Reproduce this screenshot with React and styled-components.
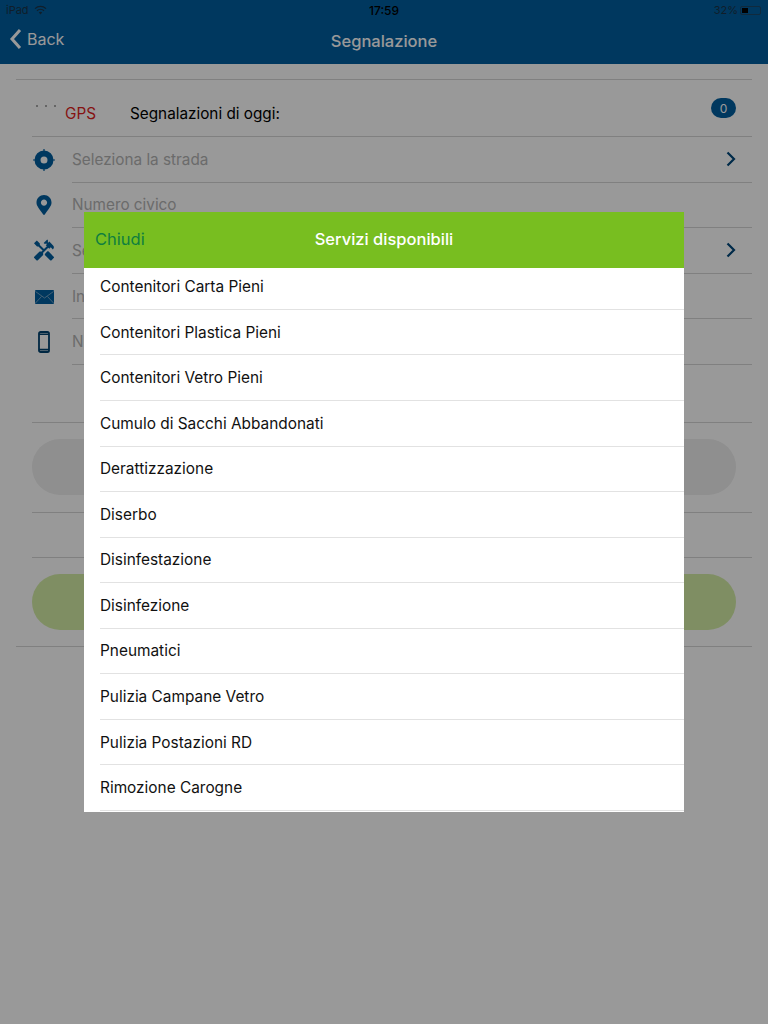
import React from "react";
import styled, { createGlobalStyle } from "styled-components";
import { FaMapMarkerAlt } from "react-icons/fa";
import { MdHandyman } from "react-icons/md";

const GlobalStyle = createGlobalStyle`
html, body {
    margin: 0;
    height: 100%;
    background: #fff;
    font-family: "Inter", "Liberation Sans", sans-serif;
}
* { box-sizing: border-box; }
`

const Page = styled.div`
width: 768px;
height: 1024px;
position: relative;
overflow: hidden;
background: #fff;
`
const Header = styled.header`
height: 64px;
background: #005e9f;
display: flex;
flex-direction: column;
`
const StatusBar = styled.div`
height: 20px;
padding: 0 6px;
display: grid;
grid-template-columns: 1fr auto 1fr;
align-items: center;
font-size: 11px;
color: #1b3347;
`
const StatusLeft = styled.div`
display: flex;
align-items: center;
gap: 5px;
`
const StatusRight = styled.div`
display: flex;
align-items: center;
justify-content: flex-end;
gap: 2px;
padding-right: 1px;
`
const Clock = styled.div`
font-weight: 500;
font-size: 12px;
color: #000;
`
const Battery = styled.div`
width: 21px;
height: 9px;
border: 1px solid #1b4666;
border-radius: 2px;
padding: 1px;
& > div { width: 6px; height: 100%; background: #000; }
`
const NavBar = styled.div`
flex: 1;
position: relative;
display: flex;
align-items: center;
justify-content: center;
padding-bottom: 2px;
color: #fff;
`
const NavTitle = styled.div`
font-size: 16.5px;
font-weight: 500;
`
const BackLink = styled.div`
position: absolute;
left: 9px;
top: 8px;
display: flex;
align-items: center;
gap: 5px;
font-size: 16px;
`
const Form = styled.main`
padding: 15px 16px 0;
`
const Divider = styled.div`
height: 1px;
background: #d6d6d6;
margin: ${props => props.$before || 0}px 0 ${props => props.$after || 0}px ${props => props.$inset || 0}px;
`
const GpsRow = styled.div`
height: 57px;
margin-left: 16px;
padding-right: 16px;
border-bottom: 1px solid #d6d6d6;
display: flex;
align-items: center;
font-size: 15.3px;
color: #000;
`
const Dots = styled.div`
width: 33px;
align-self: flex-start;
margin-top: 25px;
padding-left: 4px;
display: flex;
gap: 7px;
& > span { width: 2px; height: 2px; border-radius: 50%; background: #8b8b8b; }
`
const GpsLabel = styled.span`
color: #e01f1f;
width: 65px;
padding-top: 11px;
`
const TodayLabel = styled.span`
padding-top: 11px;
flex: 1;
`
const Badge = styled.span`
width: 25px;
height: 20px;
border-radius: 10px;
background: #005e9f;
color: #fff;
font-size: 12px;
display: flex;
align-items: center;
justify-content: center;
`
const FieldRow = styled.div`
height: 45.6px;
margin-left: 16px;
display: flex;
`
const IconSlot = styled.div`
width: 24px;
margin-right: 16px;
display: flex;
align-items: center;
justify-content: center;
color: #005e9f;
font-size: ${props => props.$size || 20}px;
`
const FieldBody = styled.div`
flex: 1;
border-bottom: 1px solid #d6d6d6;
display: flex;
align-items: center;
justify-content: space-between;
padding-right: 16px;
font-size: 15.3px;
color: #b3b3b3;
`
const ActionButton = styled.div`
height: 56px;
margin: 0 16px;
border-radius: 28px;
background: ${props => props.$bg};
`
const Backdrop = styled.div`
position: absolute;
inset: 0;
background: rgba(0, 0, 0, 0.4);
`
const Modal = styled.section`
position: absolute;
left: 84px;
top: 212px;
width: 600px;
height: 600px;
background: #fff;
overflow: hidden;
display: flex;
flex-direction: column;
`
const ModalHeader = styled.div`
height: 56px;
flex: none;
position: relative;
z-index: 1;
padding-bottom: 2px;
background: #78be20;
display: flex;
align-items: center;
justify-content: center;
color: #fff;
font-size: 16.5px;
font-weight: 500;
`
const CloseLink = styled.span`
position: absolute;
left: 11px;
color: #0f7f3f;
font-weight: 400;
`
const ServiceList = styled.ul`
list-style: none;
margin: -3.7px 0 0 16px;
padding: 0;
`
const ServiceItem = styled.li`
height: 45.55px;
border-bottom: 1px solid #e2e2e2;
display: flex;
align-items: center;
font-size: 15.4px;
color: #111;
`

const Chevron = () => (
    <svg width="10" height="16" viewBox="0 0 10 16" fill="none" stroke="#00477a" strokeWidth="2.2">
        <path d="M1.500 1.500L8 8l-6.500 6.500" />
    </svg>
)

const BackChevron = () => (
    <svg width="13" height="22" viewBox="0 0 13 22" fill="none" stroke="#fff" strokeWidth="3">
        <path d="M11 2L3 11l8 9" />
    </svg>
)

const WifiIcon = () => (
    <svg width="13" height="10" viewBox="0 0 13 10" fill="none" stroke="#1b3347" strokeWidth="1.300">
        <path d="M1 3.600a8 8 0 0 1 11 0M3 5.800a5 5 0 0 1 7 0" />
        <path d="M6.500 9.500L4.800 7.600a2.500 2.500 0 0 1 3.400 0z" fill="#1b3347" stroke="none" />
    </svg>
)

const TargetIcon = () => (
    <svg width="24" height="24" viewBox="0 0 24 24">
        <path d="M12 1v3M12 20v3M1 12h3M20 12h3" stroke="#005e9f" strokeWidth="1.200" />
        <path fillRule="evenodd" fill="#005e9f" d="M12 2.500a9.500 9.500 0 1 1 0 19a9.500 9.500 0 1 1 0-19zM12 8.500a3.500 3.500 0 1 0 0 7a3.500 3.500 0 1 0 0-7z" />
    </svg>
)

const MailIcon = () => (
    <svg width="19" height="14" viewBox="0 0 19 14">
        <rect width="19" height="14" rx="1" fill="#005e9f" />
        <path d="M0.500 1.500L9.500 8l9-6.500M0.500 13l6-6.500M18.500 13l-6-6.500" fill="none" stroke="#7fa9c6" strokeWidth="0.900" />
    </svg>
)

const PhoneIcon = () => (
    <svg width="12" height="22" viewBox="0 0 12 22" fill="none" stroke="#00426f">
        <rect x="1" y="1" width="10" height="20" rx="1.600" strokeWidth="1.800" />
        <path d="M1 3.200h10M1 18.600h10" strokeWidth="1.600" />
    </svg>
)

const services = [
    "Contenitori Carta Pieni",
    "Contenitori Plastica Pieni",
    "Contenitori Vetro Pieni",
    "Cumulo di Sacchi Abbandonati",
    "Derattizzazione",
    "Diserbo",
    "Disinfestazione",
    "Disinfezione",
    "Pneumatici",
    "Pulizia Campane Vetro",
    "Pulizia Postazioni RD",
    "Rimozione Carogne",
]

const App = () => {
    return (
        <Page>
            <GlobalStyle />
            <Header>
                <StatusBar>
                    <StatusLeft>iPad <WifiIcon /></StatusLeft>
                    <Clock>17:59</Clock>
                    <StatusRight>32% <Battery><div /></Battery></StatusRight>
                </StatusBar>
                <NavBar>
                    <BackLink><BackChevron /> Back</BackLink>
                    <NavTitle>Segnalazione</NavTitle>
                </NavBar>
            </Header>
            <Form>
                <Divider />
                <GpsRow>
                    <Dots><span /><span /><span /></Dots>
                    <GpsLabel>GPS</GpsLabel>
                    <TodayLabel>Segnalazioni di oggi:</TodayLabel>
                    <Badge>0</Badge>
                </GpsRow>
                <FieldRow>
                    <IconSlot><TargetIcon /></IconSlot>
                    <FieldBody>Seleziona la strada <Chevron /></FieldBody>
                </FieldRow>
                <FieldRow>
                    <IconSlot $size={20}><FaMapMarkerAlt /></IconSlot>
                    <FieldBody>Numero civico</FieldBody>
                </FieldRow>
                <FieldRow>
                    <IconSlot $size={25}><MdHandyman /></IconSlot>
                    <FieldBody>Seleziona il servizio <Chevron /></FieldBody>
                </FieldRow>
                <FieldRow>
                    <IconSlot><MailIcon /></IconSlot>
                    <FieldBody>Indirizzo email</FieldBody>
                </FieldRow>
                <FieldRow>
                    <IconSlot><PhoneIcon /></IconSlot>
                    <FieldBody>Numero di telefono</FieldBody>
                </FieldRow>
                <Divider $inset={16} $before={57} $after={16} />
                <ActionButton $bg="#eeeeee" />
                <Divider $inset={16} $before={17} $after={44} />
                <Divider $inset={16} $after={16} />
                <ActionButton $bg="#d4eda6" />
                <Divider $before={16} />
            </Form>
            <Backdrop />
            <Modal>
                <ModalHeader>
                    <CloseLink>Chiudi</CloseLink>
                    Servizi disponibili
                </ModalHeader>
                <ServiceList>
                    {services.map(name => <ServiceItem key={name}>{name}</ServiceItem>)}
                </ServiceList>
            </Modal>
        </Page>
    )
}

export default App;
